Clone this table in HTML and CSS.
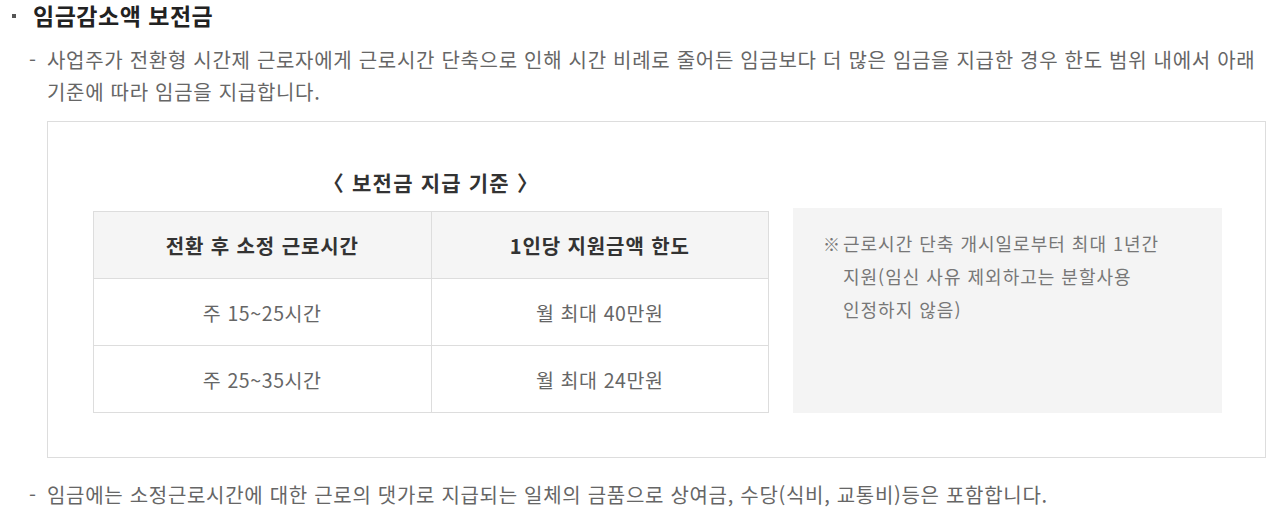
FILE: index.html
```html
<!DOCTYPE html>
<html lang="ko">
<head>
<meta charset="utf-8">
<link rel="stylesheet" href="styles.css">
</head>
<body>
<div class="page">
  <h3 class="title"><span class="square"></span>임금감소액 보전금</h3>
  <div class="dash-item">
    <span class="dash">-</span>
    <p class="dash-text">사업주가 전환형 시간제 근로자에게 근로시간 단축으로 인해 시간 비례로 줄어든 임금보다 더 많은 임금을 지급한 경우 한도 범위 내에서 아래 기준에 따라 임금을 지급합니다.</p>
  </div>
  <div class="box">
    <div class="box-left">
      <div class="caption">〈 보전금 지급 기준 〉</div>
      <table class="tbl">
        <thead>
          <tr><th>전환 후 소정 근로시간</th><th>1인당 지원금액 한도</th></tr>
        </thead>
        <tbody>
          <tr><td>주 15~25시간</td><td>월 최대 40만원</td></tr>
          <tr><td>주 25~35시간</td><td>월 최대 24만원</td></tr>
        </tbody>
      </table>
    </div>
    <div class="note">
      <p class="note-text"><span class="mark">※</span>근로시간 단축 개시일로부터 최대 1년간<br>지원(임신 사유 제외하고는 분할사용<br>인정하지 않음)</p>
    </div>
  </div>
  <div class="dash-item last">
    <span class="dash">-</span>
    <p class="dash-text">임금에는 소정근로시간에 대한 근로의 댓가로 지급되는 일체의 금품으로 상여금, 수당(식비, 교통비)등은 포함합니다.</p>
  </div>
</div>
</body>
</html>
```

FILE: styles.css
```css
html, body {
  margin: 0;
  padding: 0;
  background: #fff;
}
body {
  font-family: "Noto Sans CJK KR", "Noto Sans", sans-serif;
  color: #666;
}
.page {
  width: 1266px;
}
.title {
  display: flex;
  align-items: center;
  margin: 0;
  padding-left: 12px;
  height: 30px;
  font-size: 23px;
  font-weight: 700;
  letter-spacing: 0.5px;
  color: #222;
  line-height: 30px;
}
.square {
  width: 4px;
  height: 4px;
  background: #555;
  margin-right: 17px;
  margin-top: 2px;
}
.dash-item {
  display: flex;
  padding-left: 29px;
  margin-top: 14px;
}
.dash {
  width: 18px;
  flex: none;
  font-size: 20px;
  line-height: 32px;
  color: #666;
}
.dash-text {
  margin: 0;
  font-size: 20px;
  line-height: 32px;
  letter-spacing: 0.7px;
  color: #666;
}
.box {
  margin: 13px 0 0 47px;
  border: 1px solid #ddd;
  padding: 45px 43px 44px 45px;
  display: flex;
  align-items: flex-end;
  gap: 24px;
}
.box-left {
  width: 676px;
  flex: none;
}
.caption {
  text-align: center;
  font-size: 21px;
  font-weight: 700;
  line-height: 30px;
  letter-spacing: 1.2px;
  color: #333;
  margin-bottom: 14px;
}
.tbl {
  width: 676px;
  border-collapse: collapse;
  table-layout: fixed;
}
.tbl th, .tbl td {
  border: 1px solid #ddd;
  height: 66px;
  padding: 0;
  text-align: center;
}
.tbl th {
  background: #f5f5f5;
  color: #333;
  font-weight: 700;
  font-size: 20px;
  letter-spacing: 0.9px;
}
.tbl td {
  color: #666;
  font-weight: 400;
  font-size: 19.5px;
  letter-spacing: 0.6px;
}
.note {
  flex: 1;
  height: 205px;
  background: #f4f4f4;
  padding: 19px 20px 0 30px;
  box-sizing: border-box;
}
.note-text {
  margin: 0;
  padding-left: 20px;
  text-indent: -20px;
  font-size: 18px;
  line-height: 33px;
  letter-spacing: 1px;
  color: #777;
}
.mark {
  display: inline-block;
  width: 20px;
  text-indent: 0;
  letter-spacing: 0;
  font-size: 17px;
}
.dash-item.last {
  margin-top: 21px;
}
```
